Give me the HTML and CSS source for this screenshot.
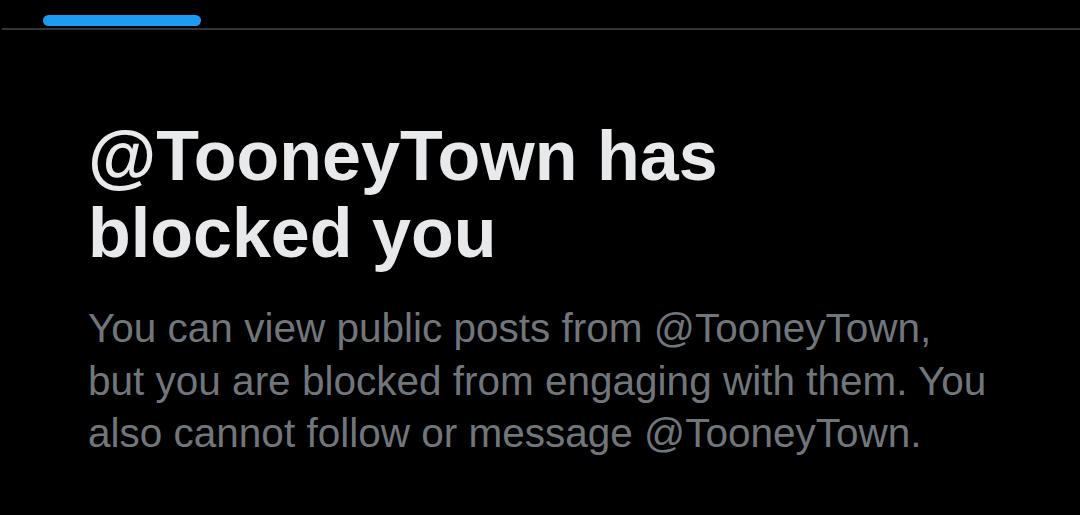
FILE: index.html
```html
<!DOCTYPE html>
<html>
<head>
<meta charset="utf-8">
<link rel="stylesheet" href="styles.css">
</head>
<body>
<div class="tabs">
  <div class="indicator"></div>
</div>
<main class="content">
  <h1 class="title">@TooneyTown has blocked you</h1>
  <p class="desc">You can view public posts from @TooneyTown, but you are blocked from engaging with them. You also cannot follow or message @TooneyTown.</p>
</main>
</body>
</html>
```
FILE: styles.css
```css
html, body {
  margin: 0;
  padding: 0;
  background: #000;
  width: 1080px;
  height: 515px;
  overflow: hidden;
}
.tabs {
  height: 28px;
  margin-left: 2px;
  border-bottom: 2px solid #333639;
  position: relative;
}
.indicator {
  position: absolute;
  left: 41px;
  top: 15px;
  width: 158px;
  height: 11px;
  border-radius: 6px;
  background: #1d9bf0;
}
.content {
  padding: 0 88px;
}
.title {
  margin: 0;
  padding-top: 88px;
  font-family: "Liberation Sans", Arial, sans-serif;
  font-weight: 700;
  font-size: 70px;
  line-height: 77px;
  color: #e7e9ea;
  width: 700px;
}
.desc {
  margin: 30px 0 0;
  font-family: "Liberation Sans", Arial, sans-serif;
  font-size: 40.5px;
  line-height: 52.5px;
  color: #71767b;
  width: 910px;
}
```
